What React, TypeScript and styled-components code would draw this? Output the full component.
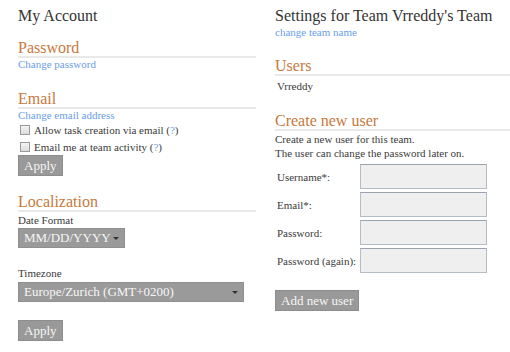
import React from "react";
import styled, { createGlobalStyle } from "styled-components";

const Global = createGlobalStyle`
  html, body {
    margin: 0;
    padding: 0;
    background: #ffffff;
  }
  body {
    font-family: "Liberation Serif", "DejaVu Serif", serif;
    color: #3a3a3a;
  }
`;

const Page = styled.div`
  display: grid;
  grid-template-columns: 238px 235px;
  column-gap: 19px;
  padding-left: 18px;
  width: 510px;
  height: 352px;
  box-sizing: border-box;
  overflow: hidden;
`;

const Column = styled.div`
  display: flex;
  flex-direction: column;
  align-items: flex-start;
`;

const Title = styled.h1`
  margin: 6px 0 0;
  font-size: 16px;
  line-height: 20px;
  font-weight: normal;
  color: #333;
`;

const SectionTitle = styled.h2<{ $top: number }>`
  align-self: stretch;
  margin: ${(p) => p.$top}px 0 0;
  font-size: 16px;
  line-height: 17px;
  font-weight: normal;
  color: #c8793c;
  border-bottom: 2px solid #e9e9e9;
`;

const Link = styled.a<{ $h?: number }>`
  display: block;
  font-size: 11px;
  line-height: ${(p) => p.$h ?? 13}px;
  color: #6a9ee8;
  text-decoration: none;
  cursor: pointer;
`;

const Text = styled.div<{ $top?: number; $indent?: number }>`
  margin-top: ${(p) => p.$top ?? 0}px;
  padding-left: ${(p) => p.$indent ?? 0}px;
  font-size: 11px;
  line-height: 14px;
  color: #3a3a3a;
`;

const CheckRow = styled.label`
  display: flex;
  align-items: center;
  height: 17px;
  padding-left: 2px;
  font-size: 11px;
  color: #3a3a3a;
`;

const Box = styled.span`
  width: 8px;
  height: 8px;
  margin-right: 4px;
  border: 1px solid #9a9a9a;
  background: linear-gradient(#f4f4f4, #dcdcdc);
`;

const Help = styled.span`
  color: #6a9ee8;
`;

const Button = styled.button<{ $top: number }>`
  margin-top: ${(p) => p.$top}px;
  height: 21px;
  padding: 0 5px;
  border: 1px solid #8d8d8d;
  background: #999999;
  color: #f6f6f6;
  font-family: "Liberation Serif", serif;
  font-size: 13px;
  line-height: 19px;
  cursor: pointer;
`;

const Select = styled.div<{ $top: number; $width: number }>`
  display: flex;
  align-items: center;
  justify-content: space-between;
  box-sizing: border-box;
  margin-top: ${(p) => p.$top}px;
  width: ${(p) => p.$width}px;
  height: 20px;
  padding: 0 5px 0 5px;
  background: #9a9a9a;
  border: 1px solid #8f8f8f;
  color: #f6f6f6;
  font-size: 13px;
`;

const Arrow = styled.span`
  width: 0;
  height: 0;
  border-left: 3px solid transparent;
  border-right: 3px solid transparent;
  border-top: 3px solid #333;
`;

const Form = styled.div`
  display: grid;
  grid-template-columns: 83px 127px;
  grid-auto-rows: 25px;
  row-gap: 3px;
  margin-top: 4px;
  padding-left: 2px;
`;

const FieldLabel = styled.label`
  display: flex;
  align-items: center;
  font-size: 11px;
  color: #3a3a3a;
  white-space: nowrap;
`;

const Input = styled.input`
  box-sizing: border-box;
  width: 127px;
  height: 25px;
  border: 1px solid #b4bcc6;
  border-top-color: #9aa4b0;
  background: #efefef;
  outline: none;
`;

const fields = ["Username*:", "Email*:", "Password:", "Password (again):"];

export default function App() {
  return (
    <>
      <Global />
      <Page>
        <Column>
          <Title>My Account</Title>
          <SectionTitle $top={13}>Password</SectionTitle>
          <Link>Change password</Link>
          <SectionTitle $top={19}>Email</SectionTitle>
          <Link $h={12}>Change email address</Link>
          <CheckRow>
            <Box />
            Allow task creation via email (<Help>?</Help>)
          </CheckRow>
          <CheckRow>
            <Box />
            Email me at team activity (<Help>?</Help>)
          </CheckRow>
          <Button $top={0}>Apply</Button>
          <SectionTitle $top={17}>Localization</SectionTitle>
          <Text $top={1}>Date Format</Text>
          <Select $top={1} $width={107}>
            MM/DD/YYYY <Arrow />
          </Select>
          <Text $top={18}>Timezone</Text>
          <Select $top={2} $width={226}>
            Europe/Zurich (GMT+0200) <Arrow />
          </Select>
          <Button $top={18}>Apply</Button>
        </Column>
        <Column>
          <Title>Settings for Team Vrreddy's Team</Title>
          <Link>change team name</Link>
          <SectionTitle $top={18}>Users</SectionTitle>
          <Text $top={3} $indent={2}>Vrreddy</Text>
          <SectionTitle $top={19}>Create new user</SectionTitle>
          <Text $top={1}>Create a new user for this team.</Text>
          <Text>The user can change the password later on.</Text>
          <Form>
            {fields.map((f) => (
              <React.Fragment key={f}>
                <FieldLabel>{f}</FieldLabel>
                <Input type={f.startsWith("Password") ? "password" : "text"} />
              </React.Fragment>
            ))}
          </Form>
          <Button $top={17}>Add new user</Button>
        </Column>
      </Page>
    </>
  );
}
